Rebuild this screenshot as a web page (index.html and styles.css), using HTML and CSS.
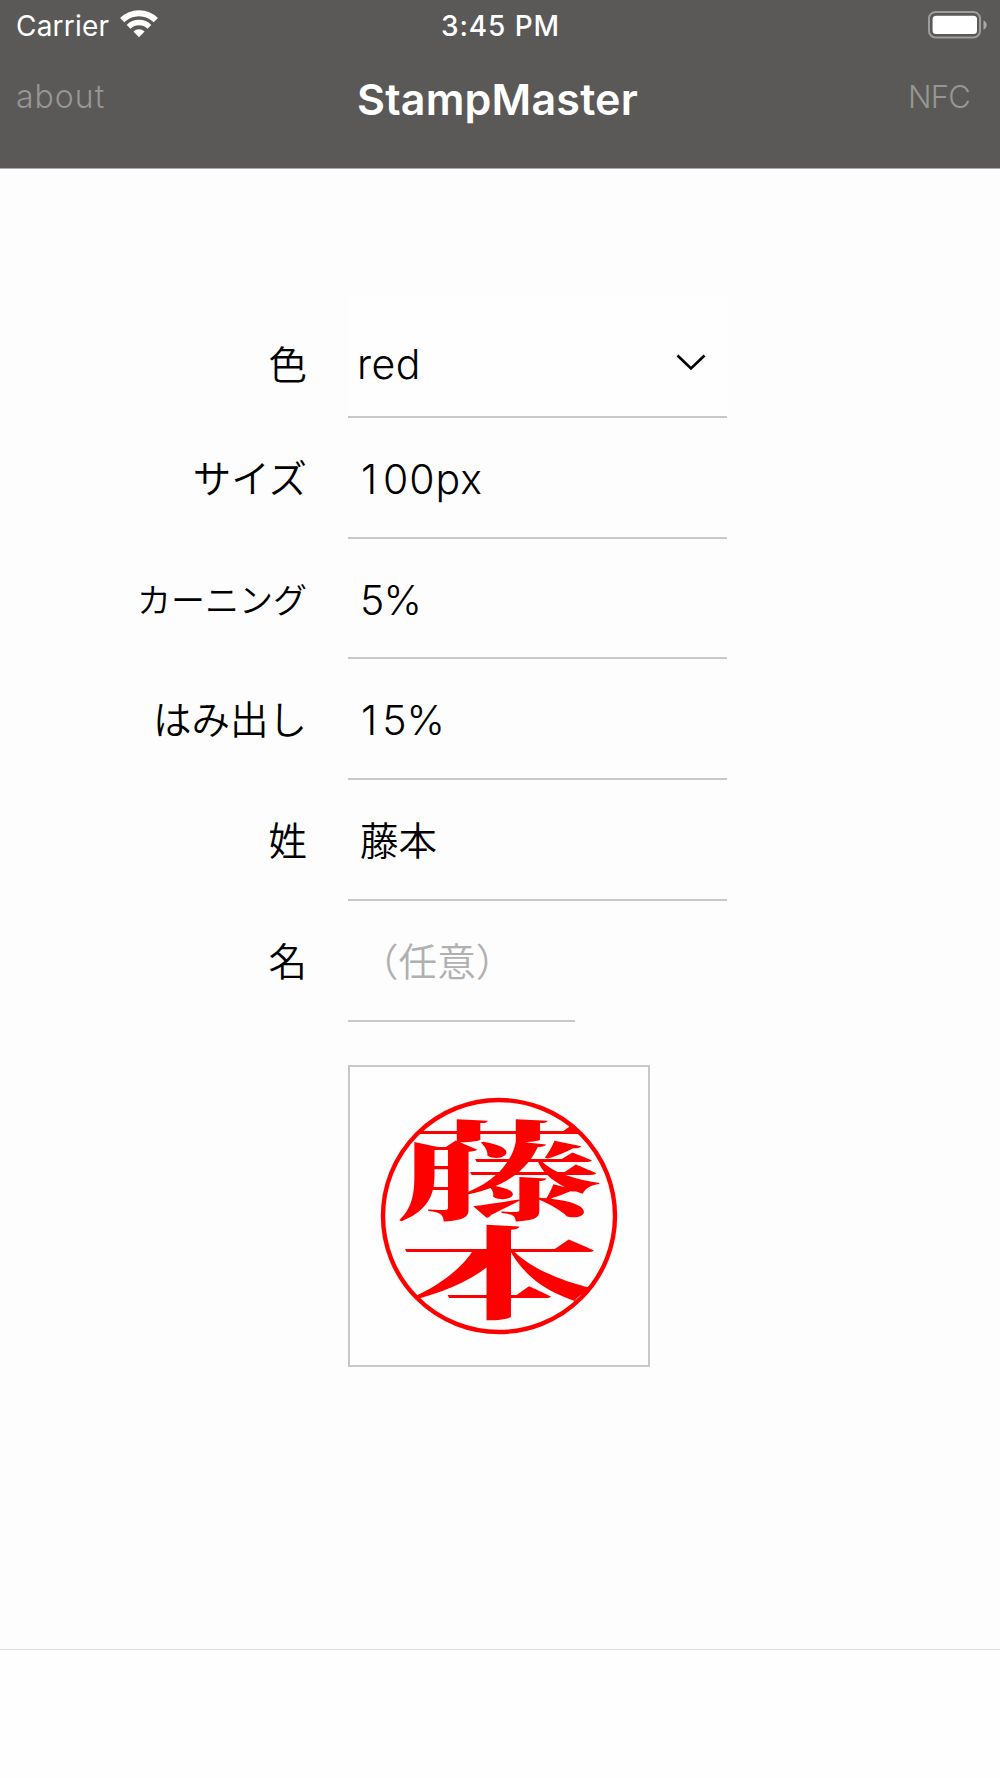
FILE: index.html
```html
<!DOCTYPE html>
<html lang="ja">
<head>
<meta charset="utf-8">
<title>StampMaster</title>
<link rel="stylesheet" href="styles.css">
</head>
<body>
<header class="header">
  <div class="status">
    <div class="carrier"><span class="carrier-name">Carrier</span>
      <svg class="wifi" viewBox="0 0 38 28" fill="none" stroke="#fff">
        <path d="M2.2 10.2a23.8 23.8 0 0 1 33.6 0" stroke-width="6"/>
        <path d="M8.6 16.8a14.8 14.8 0 0 1 20.8 0" stroke-width="5.4"/>
        <path d="M19 27.3l-5.6-5.7a8 8 0 0 1 11.2 0z" fill="#fff" stroke="none"/>
      </svg>
    </div>
    <span class="time">3:45 PM</span>
    <svg class="battery" viewBox="0 0 60 28">
      <rect x="1" y="1" width="51" height="25.4" rx="6.5" fill="none" stroke="#9d9d9b" stroke-width="2"/>
      <rect x="4.6" y="4.8" width="44.4" height="18.2" rx="3.5" fill="#fff"/>
      <path d="M55.5 9.2c4.2 2 4.2 7.6 0 9.6z" fill="#a8a8a6"/>
    </svg>
  </div>
  <nav class="nav">
    <a class="nav-link about">about</a>
    <h1 class="title">StampMaster</h1>
    <a class="nav-link nfc">NFC</a>
  </nav>
</header>
<main class="form">
  <div class="row first"><label class="label color">色</label><div class="field select"><span class="value red">red</span>
    <svg class="chevron" viewBox="0 0 30 18"><path d="M1.5 1.5L15 14.5L28.5 1.5" fill="none" stroke="#000" stroke-width="2.7"/></svg></div></div>
  <div class="row"><label class="label size">サイズ</label><div class="field"><span class="value size-value"><span class="one">1</span>00px</span></div></div>
  <div class="row"><label class="label kerning">カーニング</label><div class="field"><span class="value kerning-value">5%</span></div></div>
  <div class="row"><label class="label overflow">はみ出し</label><div class="field"><span class="value overflow-value"><span class="one">1</span>5%</span></div></div>
  <div class="row"><label class="label">姓</label><div class="field"><span class="value kanji">藤本</span></div></div>
  <div class="row"><label class="label given">名</label><div class="field short"><span class="value hint">（任意）</span></div></div>
  <div class="preview">
    <svg class="stamp" viewBox="0 0 298 298">
      <defs><clipPath id="ring"><circle cx="149" cy="149" r="117"/></clipPath></defs>
      <g class="seal" clip-path="url(#ring)">
        <text transform="translate(149 143.5) scale(2.1 1.08)" text-anchor="middle">藤</text>
        <text transform="translate(149.5 243.5) scale(2.02 1.01)" text-anchor="middle">本</text>
      </g>
      <circle cx="149" cy="149" r="116" fill="none" stroke="#f00" stroke-width="4.4"/>
    </svg>
  </div>
</main>
<footer class="toolbar"></footer>
</body>
</html>
```
FILE: styles.css
```css
* { box-sizing: border-box; }
body { margin: 0; width: 1000px; height: 1778px; display: flex; flex-direction: column; background: #fdfdfd; color: #000; font-family: Inter, "Noto Sans CJK JP", sans-serif; }
.header { height: 169px; flex: none; background: #5a5957; border-bottom: 1px solid #a9a8ac; color: #fff; }
.status { height: 52px; display: grid; grid-template-columns: 1fr auto 1fr; align-items: center; padding: 0 12px 0 16px; font-size: 28px; }
.carrier { display: flex; align-items: center; gap: 11px; }
.carrier-name { letter-spacing: 0.2px; }
.wifi { width: 38px; height: 28px; margin-top: -4px; }
.time { font-weight: 500; letter-spacing: 0.9px; margin-right: 3px; }
.battery { width: 60px; height: 28px; justify-self: end; margin-top: -3px; }
.nav { height: 92px; display: grid; grid-template-columns: 1fr auto 1fr; align-items: center; padding: 0 30px 0 16px; }
.nav-link { font-size: 31px; font-weight: 300; color: #969694; margin-top: -3px; }
.about { font-size: 32px; letter-spacing: 1px; }
.nfc { justify-self: end; letter-spacing: -0.8px; }
.title { margin: 2px 0 0 9px; font-size: 43px; font-weight: 600; letter-spacing: 0.2px; }
.form { flex: 1; padding-top: 128px; }
.row { height: 120.8px; display: grid; grid-template-columns: 307px 379px; column-gap: 41px; }
.label { justify-self: end; height: 120px; line-height: 123px; font-size: 38.5px; font-weight: 350; white-space: nowrap; }
.label.kerning { font-size: 34px; }
.field { height: 120.8px; padding: 11px 0 0 12px; border-bottom: 2px solid #c7c7cc; display: flex; line-height: 100px; }
.first .label { line-height: 137px; }
.field.short { width: 227px; }
.select { justify-content: space-between; padding-top: 17px; padding-right: 21px; padding-left: 9px; background: #fefefe; }
.value { font-size: 41px; font-weight: 300; white-space: nowrap; }
.red { letter-spacing: 0.5px; }
.size-value { letter-spacing: 0.9px; }
.kerning-value { letter-spacing: -0.8px; }
.one { margin: 0 5px 0 1px; }
.value.kanji, .value.hint { font-size: 38.5px; font-weight: 350; }
.value.hint { color: #b0b0b0; letter-spacing: 0.1px; }
.chevron { width: 30px; height: 18px; margin-top: 40px; }
.preview { width: 302px; height: 302px; margin: 43px 0 0 348px; border: 2px solid #c7c7cc; background: #fefefe; }
.stamp { display: block; width: 298px; height: 298px; }
.seal { fill: #f00; font-family: "Noto Serif CJK JP", "Noto Sans CJK JP", serif; font-size: 100px; font-weight: 700; }
.toolbar { height: 129px; flex: none; border-top: 1px solid #dcdcdc; background: #fefefe; }
```
